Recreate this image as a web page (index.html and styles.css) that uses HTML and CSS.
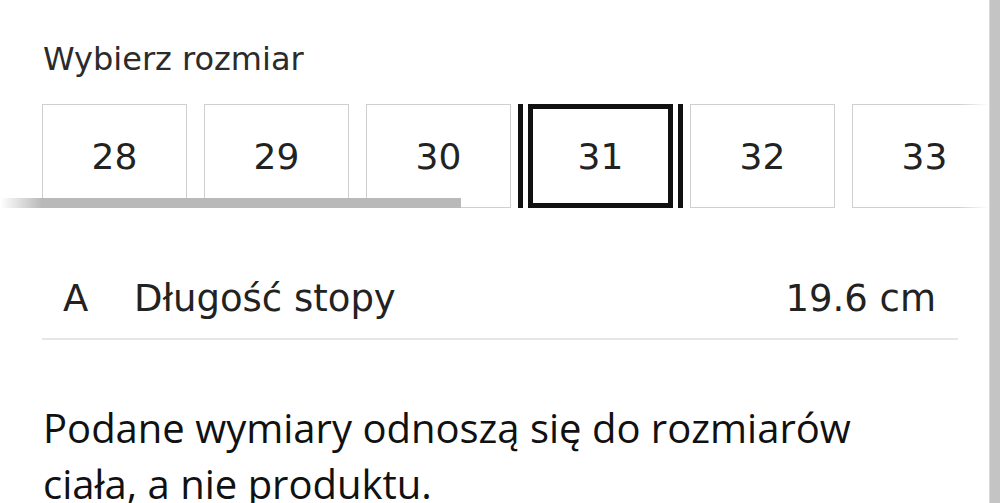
FILE: index.html
```html
<!DOCTYPE html>
<html lang="pl">
<head>
  <meta charset="UTF-8">
  <title>Wybierz rozmiar</title>
  <link rel="stylesheet" href="styles.css">
</head>
<body>
  <div class="page">
    <main class="size-panel">
      <h2 class="size-title">Wybierz rozmiar</h2>

      <div class="size-scroller">
        <div class="size-list">
          <button class="size-btn" type="button">28</button>
          <button class="size-btn" type="button">29</button>
          <button class="size-btn" type="button">30</button>
          <button class="size-btn is-selected" type="button">31</button>
          <button class="size-btn" type="button">32</button>
          <button class="size-btn" type="button">33</button>
        </div>
        <div class="size-scroll-thumb"></div>
        <div class="size-fade"></div>
      </div>

      <div class="measure-row">
        <span class="measure-key">A</span>
        <span class="measure-name">Długość stopy</span>
        <span class="measure-value">19.6 cm</span>
      </div>

      <p class="size-note">Podane wymiary odnoszą się do rozmiarów ciała, a nie produktu.</p>
    </main>
    <div class="page-scrollbar"></div>
  </div>
</body>
</html>
```

FILE: styles.css
```css
html, body {
  margin: 0;
  padding: 0;
  height: 100%;
  overflow: hidden;
  background: #fff;
}
body {
  font-family: 'DejaVu Sans', 'Noto Sans', sans-serif;
  color: #222;
}
.page {
  display: flex;
  height: 100%;
}
.size-panel {
  flex: 1;
  min-width: 0;
  overflow: hidden;
}
.page-scrollbar {
  width: 10px;
  background: #c4c4c4;
  border-left: 1px solid #dadada;
}

.size-title {
  margin: 0;
  padding: 41px 0 0 43px;
  font-size: 32px;
  font-weight: 400;
  line-height: 36px;
  color: #2b2b2b;
}

.size-scroller {
  position: relative;
  margin-top: 27px;
  overflow: hidden;
}
.size-list {
  display: flex;
  gap: 17px;
  padding-left: 42px;
}
.size-btn {
  flex: 0 0 145px;
  height: 104px;
  box-sizing: border-box;
  border: 1px solid #cfcfcf;
  background: #fff;
  font-family: inherit;
  font-size: 36px;
  color: #222;
  padding: 0;
  position: relative;
}
.size-btn.is-selected {
  border: 5px solid #111;
}
/* double rule on each side of the chosen size */
.size-btn.is-selected::before,
.size-btn.is-selected::after {
  content: '';
  position: absolute;
  top: -5px;
  bottom: -5px;
  width: 5px;
  background: #111;
}
.size-btn.is-selected::before { left: -15px; }
.size-btn.is-selected::after { right: -15px; }

.size-scroll-thumb {
  position: absolute;
  left: 0;
  bottom: 0;
  width: 461px;
  height: 10px;
  background: linear-gradient(to right, rgba(184,184,184,0) 0, #b9b9b9 42px, #b9b9b9 100%);
}
.size-fade {
  position: absolute;
  right: 0;
  top: 0;
  bottom: 0;
  width: 30px;
  background: linear-gradient(to right, rgba(255,255,255,0), #fff);
}

.measure-row {
  display: flex;
  align-items: baseline;
  margin: 69px 31px 0 42px;
  padding: 0 22px 18px 21px;
  border-bottom: 2px solid #e6e6e6;
  font-size: 37px;
  color: #222;
}
.measure-key { width: 71px; }
.measure-name { flex: 1; }

.size-note {
  margin: 60px 76px 0 43px;
  font-family: 'Open Sans', 'Noto Sans', sans-serif;
  font-size: 40px;
  line-height: 56px;
  color: #111;
}
```
